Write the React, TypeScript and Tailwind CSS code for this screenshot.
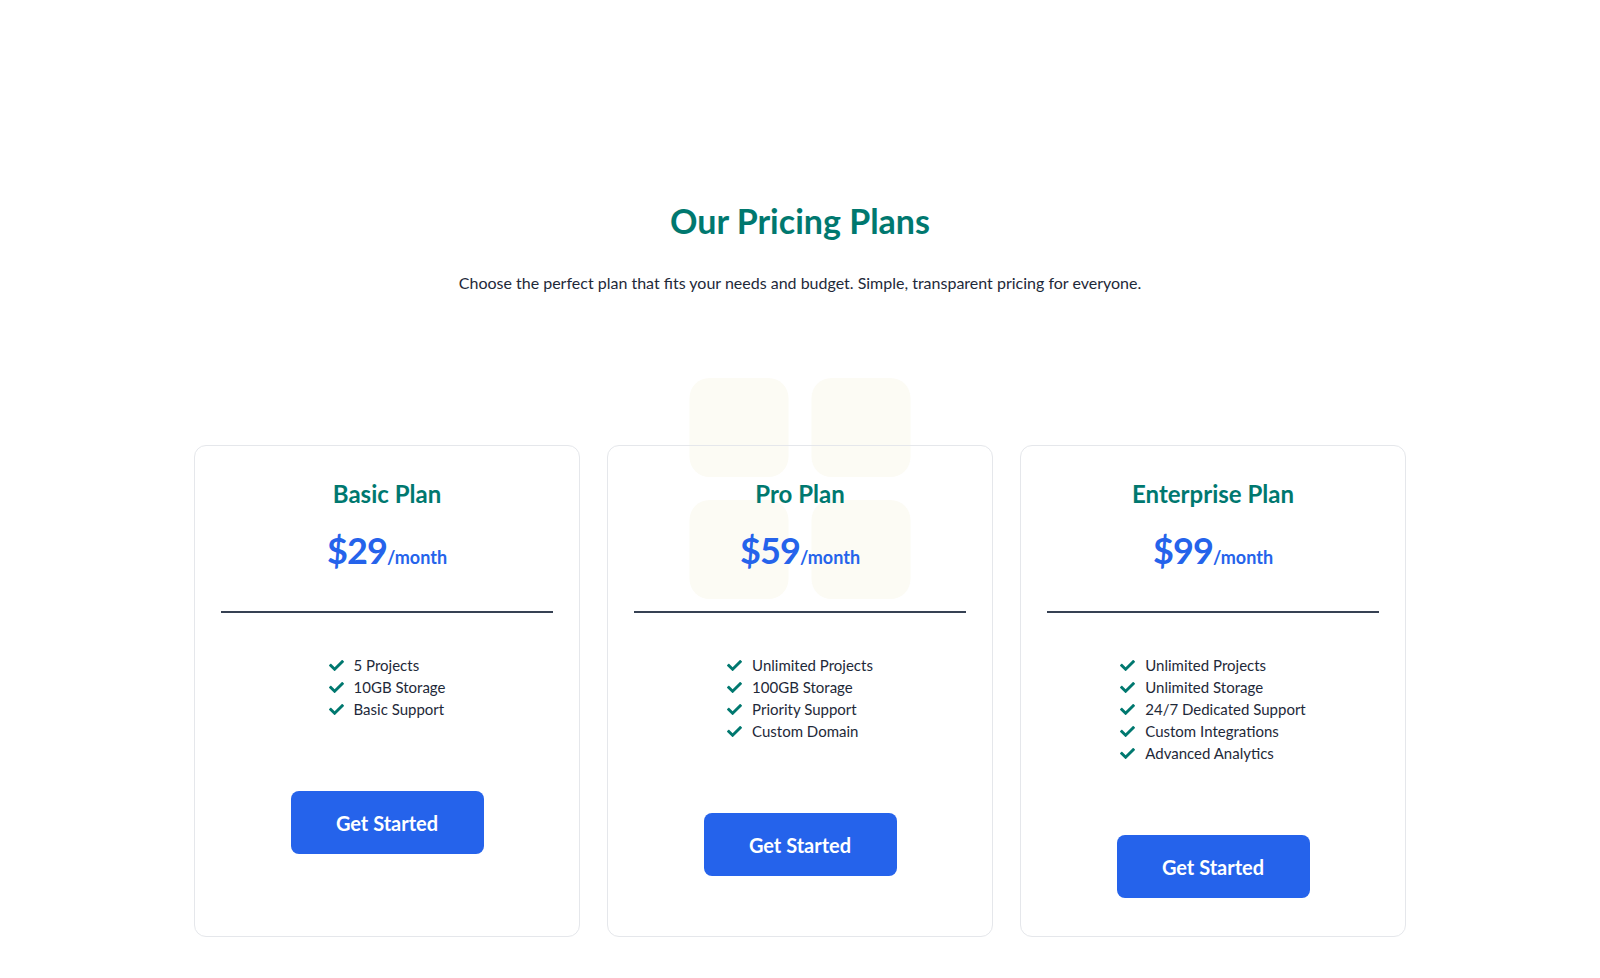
import { FaCheck } from 'react-icons/fa';

type Plan = {
  name: string;
  price: string;
  features: string[];
};

const plans: Plan[] = [
  { name: 'Basic Plan', price: '$29', features: ['5 Projects', '10GB Storage', 'Basic Support'] },
  {
    name: 'Pro Plan',
    price: '$59',
    features: ['Unlimited Projects', '100GB Storage', 'Priority Support', 'Custom Domain'],
  },
  {
    name: 'Enterprise Plan',
    price: '$99',
    features: [
      'Unlimited Projects',
      'Unlimited Storage',
      '24/7 Dedicated Support',
      'Custom Integrations',
      'Advanced Analytics',
    ],
  },
];

const PlanCard = ({ plan }: { plan: Plan }) => (
  <div className="relative border border-gray-200 rounded-xl px-[26px] pt-8 pb-[38px] flex flex-col items-center">
    {/* Header */}
    <div className="w-full flex flex-col items-center border-b-2 border-gray-700 pb-10">
      <h3 className="text-2xl font-bold text-teal-700">{plan.name}</h3>
      <div className="mt-[20px] flex items-baseline text-[#2563eb]">
        <span className="text-4xl font-bold tracking-tight">{plan.price}</span>
        <span className="text-lg font-bold">/month</span>
      </div>
    </div>

    {/* Features */}
    <ul className="mt-[41px] flex flex-col">
      {plan.features.map((f) => (
        <li key={f} className="flex items-center gap-[10px] text-[15px] leading-[22px] text-gray-800">
          <FaCheck className="w-[15px] h-[15px] text-teal-700 shrink-0" />
          <span>{f}</span>
        </li>
      ))}
    </ul>

    <button className="mt-[71px] w-[193px] h-[63px] rounded-lg bg-[#2563eb] text-white text-xl font-bold flex items-center justify-center">
      Get Started
    </button>
  </div>
);

export default function App() {
  return (
    <main
      className="min-h-screen bg-white flex flex-col items-center pt-[203px] pb-10"
      style={{ fontFamily: 'Lato, "Noto Sans", sans-serif' }}
    >
      <h2 className="text-[34px] leading-9 font-bold text-teal-700">Our Pricing Plans</h2>
      <p className="mt-[32px] text-base text-gray-800">
        Choose the perfect plan that fits your needs and budget. Simple, transparent pricing for everyone.
      </p>

      <div className="relative mt-[150px] w-[1212px]">
        {/* decorative squares */}
        <div className="absolute left-1/2 -translate-x-1/2 -top-[67px] grid grid-cols-2 gap-[23px]">
          <div className="w-[99px] h-[99px] rounded-[20px] bg-[#fcfbf4]" />
          <div className="w-[99px] h-[99px] rounded-[20px] bg-[#fcfbf4]" />
          <div className="w-[99px] h-[99px] rounded-[20px] bg-[#fcfbf4]" />
          <div className="w-[99px] h-[99px] rounded-[20px] bg-[#fcfbf4]" />
        </div>

        <div className="relative grid grid-cols-3 gap-[27px]">
          {plans.map((p) => (
            <PlanCard key={p.name} plan={p} />
          ))}
        </div>
      </div>
    </main>
  );
}
